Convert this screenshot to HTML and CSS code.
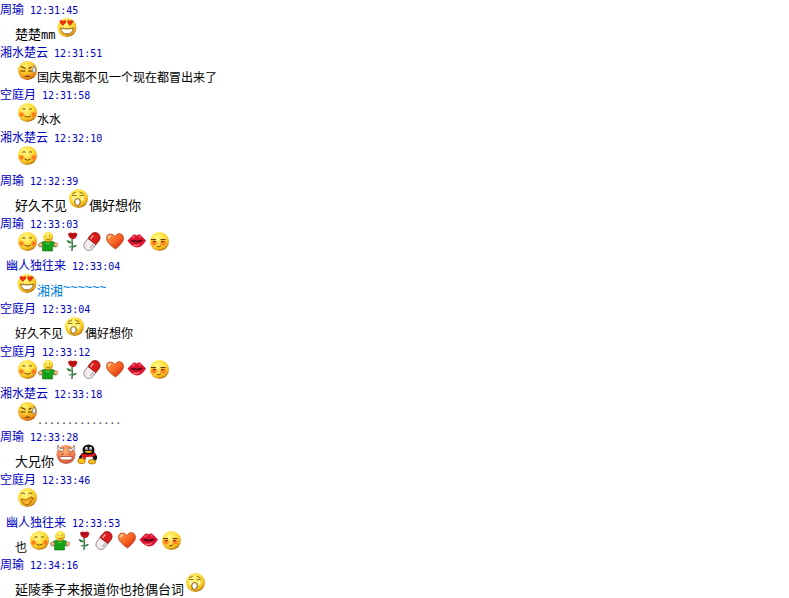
FILE: index.html
```html
<!DOCTYPE html>
<html lang="zh-CN">
<head>
  <meta charset="utf-8">
  <title>聊天记录</title>
  <link rel="stylesheet" href="styles.css">
</head>
<body>
  <!-- emoticons, all on a 22x22 grid -->
  <svg class="sprites" aria-hidden="true">
    <defs>
      <radialGradient id="yellow" cx="40%" cy="32%" r="68%">
        <stop offset="0" stop-color="#fff98a"/>
        <stop offset="0.6" stop-color="#fddc35"/>
        <stop offset="0.85" stop-color="#f0b41e"/>
        <stop offset="1" stop-color="#b97a10"/>
      </radialGradient>
      <radialGradient id="amber" cx="40%" cy="25%" r="75%">
        <stop offset="0" stop-color="#fff26a"/>
        <stop offset="0.5" stop-color="#fcc72c"/>
        <stop offset="0.85" stop-color="#f08a18"/>
        <stop offset="1" stop-color="#b85d0c"/>
      </radialGradient>
      <radialGradient id="coral" cx="45%" cy="30%" r="70%">
        <stop offset="0" stop-color="#ffb06c"/>
        <stop offset="0.7" stop-color="#f47a4e"/>
        <stop offset="1" stop-color="#c04c3c"/>
      </radialGradient>
      <radialGradient id="cheek">
        <stop offset="0" stop-color="#ff5a14"/>
        <stop offset="0.5" stop-color="#ff7a20" stop-opacity="0.8"/>
        <stop offset="1" stop-color="#ff8c20" stop-opacity="0.1"/>
      </radialGradient>
      <linearGradient id="ember" x1="0" y1="0" x2="1" y2="1">
        <stop offset="0" stop-color="#ff9c50"/>
        <stop offset="0.5" stop-color="#fa6624"/>
        <stop offset="1" stop-color="#c81c08"/>
      </linearGradient>

      <symbol id="smile" viewBox="0 0 22 22">
        <circle cx="12.500" cy="10.500" r="9.500" fill="url(#yellow)"/>
        <circle cx="6.500" cy="12.500" r="3.200" fill="url(#cheek)"/>
        <circle cx="18.500" cy="12.500" r="3.200" fill="url(#cheek)"/>
        <path d="M7.500 7.500q1.500-2 3 0M14 7.500q1.500-2 3 0M9.500 14q3 2.500 6 0" fill="none" stroke="#6b4208" stroke-width="1"/>
      </symbol>

      <symbol id="love" viewBox="0 0 22 22">
        <circle cx="12" cy="10.500" r="9.500" fill="url(#yellow)"/>
        <path d="M8 9L5 6q-1-3 1-3l2 1 1.500-1q2 0 1.500 2.500zM15 9l-2.500-3q-1-3 1-3L15 4l1.500-1Q19 3 18 5.500z" fill="#e8340c"/>
        <path d="M5.500 11q6.500 2 13 0-1 6-6.500 6t-6.500-6z" fill="#fff" stroke="#9a5c0a" stroke-width="1"/>
      </symbol>

      <symbol id="sweat" viewBox="0 0 22 22">
        <circle cx="12.500" cy="10.500" r="9.500" fill="url(#amber)"/>
        <path d="M6 6.500l4.500 2M5.500 11h5M13 11h4.500M13.500 8.500l3-1.500M10 16.500q2.500-1 5 0" fill="none" stroke="#573004" stroke-width="1.100"/>
        <path d="M19 5.500q-2.500 5-1 6.500 1.500 1 2.500-.5 1-2-1.500-6z" fill="#f3f8ff" stroke="#70757f" stroke-width="0.800"/>
      </symbol>

      <symbol id="yawn" viewBox="0 0 22 22">
        <circle cx="11.500" cy="10.500" r="9.500" fill="url(#yellow)"/>
        <path d="M5 6l4-2M5 7.500h4.500M12.500 4l4 2M12.500 7.500H17" fill="none" stroke="#8a6414" stroke-width="0.900"/>
        <path d="M6.500 8.500v4M15.500 8.500v4" stroke="#fffbe0" stroke-width="1.600"/>
        <ellipse cx="10.500" cy="14" rx="2.800" ry="3.400" fill="#fff" stroke="#7c5610" stroke-width="1"/>
      </symbol>

      <symbol id="shy" viewBox="0 0 22 22">
        <circle cx="12.500" cy="10.500" r="9.500" fill="url(#yellow)"/>
        <ellipse cx="7" cy="12" rx="4" ry="3.500" fill="url(#cheek)"/>
        <ellipse cx="16" cy="12" rx="4" ry="3.500" fill="url(#cheek)"/>
        <path d="M4 8.500h5M13.500 8.500h5" stroke="#5f3804" stroke-width="1.100"/>
        <path d="M6 10.500h3M14 10.500h3" stroke="#7a3c06" stroke-width="1.100"/>
        <path d="M10 15.500q2 1 4-.8" fill="none" stroke="#7a4806" stroke-width="1"/>
      </symbol>

      <symbol id="giggle" viewBox="0 0 22 22">
        <circle cx="12.500" cy="10.500" r="9.500" fill="url(#yellow)"/>
        <path d="M6 7q2-2.500 4 0M13.500 7q2-2.500 4 0" fill="none" stroke="#6b4a08" stroke-width="1"/>
        <path d="M6 12l5 1 5-3q2-.5 1 1.500l1.500-.5q1 1-1 2.500-3 5-6.500 4.500-3.500-1-5-6z" fill="#fcb92c" stroke="#a8560c" stroke-width="0.900"/>
        <path d="M13.500 13.500l3-2M14 15.500l3-2.500" stroke="#a8660c" stroke-width="0.700"/>
      </symbol>

      <symbol id="devil" viewBox="0 0 22 22">
        <circle cx="12" cy="10.500" r="9.500" fill="url(#coral)"/>
        <path d="M4 1Q2 6 7 7.500q3.500-.5 2.500-4-2 2.500-4 .5-1-1-1.500-3zM20 1q2 5-3 6.500-3.500-.5-2.500-4 2 2.500 4 .5 1-1 1.500-3z" fill="#fbf3ea" stroke="#75594e" stroke-width="0.700"/>
        <path d="M7 10h3M14 10h3" stroke="#b8442c" stroke-width="0.900"/>
        <path d="M5.500 12.500h13q0 3.500-3 3.500h-7q-3 0-3-3.500z" fill="#fff" stroke="#b04430" stroke-width="0.800"/>
      </symbol>

      <symbol id="penguin" viewBox="0 0 22 22">
        <path d="M6 9l-3 4q-.5 3 1 3.500L6 19h11l2-2q2.500-1 2-5l-3-4z" fill="#151515"/>
        <ellipse cx="11.500" cy="15" rx="5.500" ry="4.800" fill="#fff"/>
        <ellipse cx="12.500" cy="5.800" rx="6" ry="5.300" fill="#111"/>
        <ellipse cx="10.500" cy="4.500" rx="1.300" ry="1.800" fill="#fff"/>
        <ellipse cx="14.500" cy="4.500" rx="1.300" ry="1.800" fill="#fff"/>
        <circle cx="10.900" cy="4.800" r="0.600" fill="#111"/>
        <circle cx="14.100" cy="4.800" r="0.600" fill="#111"/>
        <ellipse cx="12.500" cy="7.800" rx="3.500" ry="1.100" fill="#fbb416"/>
        <path d="M5.500 9.500q7 2.500 14-.5v2.500q-4 2-9.500 1.500L9.500 16l-3-.5.500-3-2-1z" fill="#e3151b"/>
        <ellipse cx="5.500" cy="17" rx="3.800" ry="2.700" fill="#fcc21c" stroke="#94610a" stroke-width="0.700"/>
        <ellipse cx="16" cy="17.800" rx="3.800" ry="2.200" fill="#fcc21c" stroke="#94610a" stroke-width="0.700"/>
      </symbol>

      <symbol id="hug" viewBox="0 0 22 22">
        <path d="M6 10.500h10l4 3-1 2.500-3.500-.5V20h-10v-4.500l-3 .5-1-2.500z" fill="#16a018" stroke="#0b7411" stroke-width="0.600"/>
        <path d="M9 12q2 2 4 0" fill="none" stroke="#5cd64a" stroke-width="1"/>
        <circle cx="3.500" cy="13.800" r="2" fill="#f5b58e" stroke="#a66a42" stroke-width="0.500"/>
        <circle cx="19" cy="13.800" r="2" fill="#f5b58e" stroke="#a66a42" stroke-width="0.500"/>
        <circle cx="11" cy="6" r="5" fill="url(#yellow)"/>
        <path d="M9 4.500v1.300M12.500 4.500v1.300M9 8q2 1.200 4 0" fill="none" stroke="#96690c" stroke-width="0.800"/>
      </symbol>

      <symbol id="rose" viewBox="0 0 22 22">
        <path d="M13 8q.5 6 0 12" fill="none" stroke="#1f5a2e" stroke-width="1.300"/>
        <path d="M13 12q-2.500-3.500-5.500-2.500Q9 13 13 12zM13 16.500q3-3.500 5-2-1.500 2.500-5 2zM13 15q-3-.5-3.500 1.500 2 .5 3.500-1.500z" fill="#2a7a38"/>
        <path d="M9 2.500l2.500-1L14 2l2.500-.5 2 1.500q-1 5-4.500 5.200Q9.500 7.500 9 2.500z" fill="#c8141c"/>
        <path d="M10.500 3.500q3 2 6 0" fill="none" stroke="#780810" stroke-width="0.900"/>
      </symbol>

      <symbol id="pill" viewBox="0 0 22 22">
        <g transform="rotate(38 11 10.500)">
          <path d="M6 10.500v5a5 5 0 0 0 10 0v-5z" fill="#f3eeed" stroke="#8f7a7a" stroke-width="0.800"/>
          <path d="M6 10.500v-5a5 5 0 0 1 10 0v5z" fill="#dc1c1c" stroke="#8f1212" stroke-width="0.800"/>
          <path d="M8.300 5v4.500" stroke="#ff9c90" stroke-width="1.500"/>
          <path d="M13.800 11.500v5" stroke="#c2b6b6" stroke-width="1.800"/>
        </g>
      </symbol>

      <symbol id="heart" viewBox="0 0 22 22">
        <path d="M12.500 18Q3.500 12 3.500 7.500 3.500 3 7.500 3q3 0 4.500 2.500 1.500-3 4.500-3 4 .5 4 5 0 4-8 10.500z" fill="url(#ember)" stroke="#b63212" stroke-width="0.700"/>
        <path d="M5.500 7.500Q6 5 8 5" fill="none" stroke="#ffd7a0" stroke-width="1.500"/>
      </symbol>

      <symbol id="kiss" viewBox="0 0 22 22">
        <path d="M2.500 9.500l6-6q1.500-.5 3 1 2-1.500 3.500-1l6 6q-3.500 6.500-9 7-6-1-9.500-7z" fill="#dd1530"/>
        <path d="M5 9.500l4-.8 2.500.8 3-.8 4 .5-4 2.300H9z" fill="#650719"/>
        <path d="M7.500 6.500l2-1M14 5.500l1.500.5M8.500 14q3 1.200 6-.5" fill="none" stroke="#ff8a94" stroke-width="1.200"/>
      </symbol>
    </defs>
  </svg>

  <ul class="log">
    <li class="entry">
      <div class="who">周瑜<time> 12:31:45</time></div>
      <div class="msg big"><span>楚楚<span class="latin">mm</span></span><svg class="emo"><use href="#love"/></svg></div>
    </li>
    <li class="entry">
      <div class="who">湘水楚云<time> 12:31:51</time></div>
      <div class="msg"><svg class="emo"><use href="#sweat"/></svg><span>国庆鬼都不见一个现在都冒出来了</span></div>
    </li>
    <li class="entry">
      <div class="who">空庭月<time> 12:31:58</time></div>
      <div class="msg"><svg class="emo"><use href="#smile"/></svg><span>水水</span></div>
    </li>
    <li class="entry">
      <div class="who">湘水楚云<time> 12:32:10</time></div>
      <div class="msg"><svg class="emo"><use href="#smile"/></svg></div>
    </li>
    <li class="entry">
      <div class="who">周瑜<time> 12:32:39</time></div>
      <div class="msg big"><span>好久不见</span><svg class="emo"><use href="#yawn"/></svg><span>偶好想你</span></div>
    </li>
    <li class="entry">
      <div class="who">周瑜<time> 12:33:03</time></div>
      <div class="msg"><svg class="emo"><use href="#smile"/></svg><svg class="emo"><use href="#hug"/></svg><svg class="emo"><use href="#rose"/></svg><svg class="emo"><use href="#pill"/></svg><svg class="emo"><use href="#heart"/></svg><svg class="emo"><use href="#kiss"/></svg><svg class="emo"><use href="#shy"/></svg></div>
    </li>
    <li class="entry">
      <div class="who indent">幽人独往来<time> 12:33:04</time></div>
      <div class="msg big blue"><svg class="emo"><use href="#love"/></svg><span>湘湘<span class="latin tilde">~~~~~~</span></span></div>
    </li>
    <li class="entry">
      <div class="who">空庭月<time> 12:33:04</time></div>
      <div class="msg"><span>好久不见</span><svg class="emo"><use href="#yawn"/></svg><span>偶好想你</span></div>
    </li>
    <li class="entry">
      <div class="who">空庭月<time> 12:33:12</time></div>
      <div class="msg"><svg class="emo"><use href="#smile"/></svg><svg class="emo"><use href="#hug"/></svg><svg class="emo"><use href="#rose"/></svg><svg class="emo"><use href="#pill"/></svg><svg class="emo"><use href="#heart"/></svg><svg class="emo"><use href="#kiss"/></svg><svg class="emo"><use href="#shy"/></svg></div>
    </li>
    <li class="entry">
      <div class="who">湘水楚云<time> 12:33:18</time></div>
      <div class="msg"><svg class="emo"><use href="#sweat"/></svg><span><span class="latin dots">..............</span></span></div>
    </li>
    <li class="entry">
      <div class="who">周瑜<time> 12:33:28</time></div>
      <div class="msg big"><span>大兄你</span><svg class="emo"><use href="#devil"/></svg><svg class="emo"><use href="#penguin"/></svg></div>
    </li>
    <li class="entry">
      <div class="who">空庭月<time> 12:33:46</time></div>
      <div class="msg"><svg class="emo"><use href="#giggle"/></svg></div>
    </li>
    <li class="entry">
      <div class="who indent">幽人独往来<time> 12:33:53</time></div>
      <div class="msg"><span>也</span><svg class="emo"><use href="#smile"/></svg><svg class="emo"><use href="#hug"/></svg><svg class="emo"><use href="#rose"/></svg><svg class="emo"><use href="#pill"/></svg><svg class="emo"><use href="#heart"/></svg><svg class="emo"><use href="#kiss"/></svg><svg class="emo"><use href="#shy"/></svg></div>
    </li>
    <li class="entry">
      <div class="who">周瑜<time> 12:34:16</time></div>
      <div class="msg big"><span>延陵季子来报道你也抢偶台词</span><svg class="emo"><use href="#yawn"/></svg></div>
    </li>
  </ul>
</body>
</html>
```
FILE: styles.css
```css
body {
  margin: 0;
  background: #fff;
  color: #000;
  font-family: "Noto Sans CJK SC", sans-serif;
  font-size: 12px;
  line-height: 16px;
}

.sprites {
  position: absolute;
  width: 0;
  height: 0;
}

/* rows share the window height evenly */
.log {
  display: grid;
  grid-auto-rows: 1fr;
  min-height: 100vh;
  margin: 0;
  padding: 0;
  list-style: none;
}

.who {
  line-height: 17px;
  color: #0000c0;
  white-space: pre;
}

.who time,
.latin {
  font-family: "DejaVu Sans Mono", monospace;
  font-size: 10px;
  line-height: 1;
}

.indent {
  padding-left: 6px;
}

.msg {
  display: flex;
  align-items: flex-end;
  padding-left: 15px;
}

.big {
  font-size: 13px;
}

.big .latin {
  font-size: 12px;
}

.tilde {
  vertical-align: 4px;
}

.dots {
  vertical-align: -2px;
  color: #333;
}

.blue {
  color: #0080e0;
}

.emo {
  flex: none;
  width: 22px;
  height: 22px;
  margin-bottom: 3px;
}
```
